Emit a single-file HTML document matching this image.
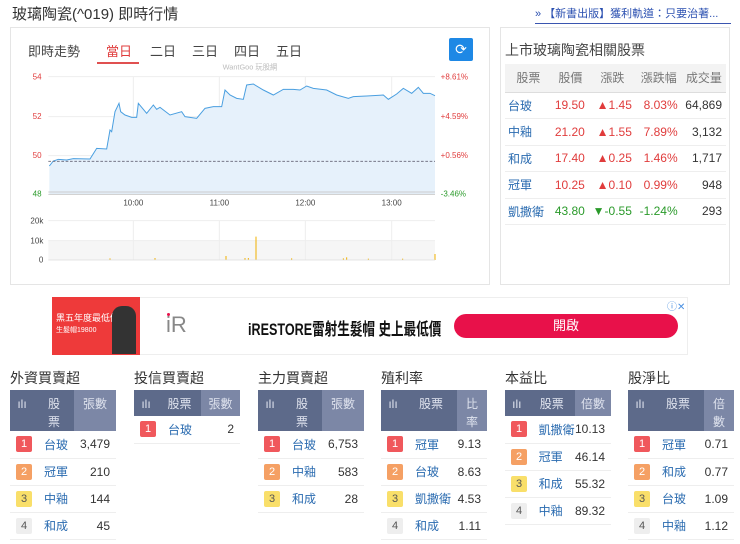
<!DOCTYPE html>
<html><head><meta charset="utf-8"><style>
*{margin:0;padding:0;box-sizing:border-box}
body{width:740px;height:544px;background:#fff;font-family:"Liberation Sans","Noto Sans CJK TC",sans-serif;color:#333;position:relative;overflow:hidden}
.a{position:absolute;white-space:nowrap}
table{border-collapse:collapse}
.rt{position:absolute;left:505px;top:64px;width:221px;font-size:12px}
.rt th{background:#f3f3f3;color:#777;font-weight:normal;height:28px;border-bottom:1px solid #ddd}
.rt td{height:26.5px;border-bottom:1px solid #eee;text-align:right;padding-right:4px}
.rt td:first-child{text-align:left;color:#2a6bb0;padding-left:3px}
.r{color:#e03c3c}.g{color:#2a9a2a}
.col{position:absolute;top:370px;width:106px;font-size:12px}
.col h3{font-weight:normal;font-size:14px;color:#333;height:20px;line-height:16px}
.col table{width:106px}
.col th{background:#5d6a8a;color:#dfe3ee;font-weight:normal;font-size:12px;vertical-align:top;padding-top:5px;line-height:18px}
.col th.l{background:#7c87a6}
.col td{height:27px;border-bottom:1px solid #eee}
.n{display:inline-block;width:16px;height:16px;border-radius:2px;color:#fff;font-size:11px;text-align:center;line-height:16px;margin-left:6px}
.n1{background:#f0585c}.n2{background:#f5a064}.n3{background:#f9df6a;color:#555}.n4{background:#eee;color:#555}
.nm{color:#2a6bb0;text-align:left;padding-left:10px}
.v{text-align:right;padding-right:6px;color:#333}
</style></head><body>
<div class="a" style="left:12px;top:3px;font-size:15px;color:#333">玻璃陶瓷(^019) 即時行情</div>
<div class="a" style="left:535px;top:5px;font-size:11px;color:#2a4fb0;border-bottom:1px solid #3a55b0;padding-bottom:2px;width:196px">» 【新書出版】獲利軌道：只要治著...</div>
<div class="a" style="left:10px;top:27px;width:480px;height:258px;border:1px solid #e5e5e5"></div>
<div class="a" style="left:500px;top:27px;width:230px;height:258px;border:1px solid #e5e5e5"></div>
<div class="a" style="left:28px;top:41px;font-size:13px;color:#444">即時走勢</div>
<div class="a" style="left:97px;top:41px;font-size:13px;color:#444;width:190px">
<span style="position:absolute;left:9px;color:#e03c3c">當日</span><span style="position:absolute;left:53px">二日</span><span style="position:absolute;left:95px">三日</span><span style="position:absolute;left:137px">四日</span><span style="position:absolute;left:179px">五日</span></div>
<div class="a" style="left:97px;top:62px;width:42px;height:2px;background:#e05050"></div>
<div class="a" style="left:449px;top:38px;width:24px;height:23px;background:#1e88e5;border-radius:2px;color:#fff;font-size:14px;text-align:center;line-height:23px">⟳</div>
<svg class="a" style="left:0;top:0" width="490" height="280" viewBox="0 0 1470 840">
<text x="750" y="208" font-size="22" fill="#bbb" text-anchor="middle" font-family="Liberation Sans">WantGoo 玩股網</text>
<g stroke="#eee" stroke-width="3"><line x1="400" y1="230" x2="400" y2="583"/><line x1="658" y1="230" x2="658" y2="583"/><line x1="916" y1="230" x2="916" y2="583"/><line x1="1175" y1="230" x2="1175" y2="583"/>
<line x1="145" y1="230" x2="1305" y2="230"/><line x1="145" y1="350" x2="1305" y2="350"/><line x1="145" y1="467" x2="1305" y2="467"/></g>
<path d="M148,498 L160,483 175,478 200,480 220,476 270,477 290,445 320,447 330,390 335,395 345,335 357,310 362,335 375,345 395,352 410,352 415,310 440,340 460,315 470,328 480,322 510,345 545,335 555,350 590,355 615,325 640,320 665,320 675,270 690,285 710,295 730,298 740,255 760,252 790,270 820,285 850,268 880,268 900,270 920,258 940,265 980,270 1010,285 1045,295 1060,290 1100,288 1150,285 1165,298 1190,282 1210,265 1235,280 1255,262 1270,280 1290,280 1305,287 L1305,583 L148,583Z" fill="#e6f1fb" stroke="none"/>
<path d="M148,498 L160,483 175,478 200,480 220,476 270,477 290,445 320,447 330,390 335,395 345,335 357,310 362,335 375,345 395,352 410,352 415,310 440,340 460,315 470,328 480,322 510,345 545,335 555,350 590,355 615,325 640,320 665,320 675,270 690,285 710,295 730,298 740,255 760,252 790,270 820,285 850,268 880,268 900,270 920,258 940,265 980,270 1010,285 1045,295 1060,290 1100,288 1150,285 1165,298 1190,282 1210,265 1235,280 1255,262 1270,280 1290,280 1305,287" fill="none" stroke="#4a9fe0" stroke-width="3"/>
<line x1="145" y1="484" x2="1305" y2="484" stroke="#667" stroke-width="2.5" stroke-dasharray="8,5"/>
<line x1="145" y1="576" x2="1305" y2="576" stroke="#ccc" stroke-width="3"/>
<line x1="145" y1="583" x2="1305" y2="583" stroke="#ccc" stroke-width="3"/>
<g font-family="Liberation Sans" font-size="24"><text x="98" y="238" fill="#e03c3c">54</text><text x="98" y="357" fill="#e03c3c">52</text><text x="98" y="474" fill="#e03c3c">50</text><text x="98" y="590" fill="#2a9a2a">48</text>
<text x="1322" y="238" fill="#e03c3c">+8.61%</text><text x="1322" y="357" fill="#e03c3c">+4.59%</text><text x="1322" y="474" fill="#e03c3c">+0.56%</text><text x="1322" y="590" fill="#2a9a2a">-3.46%</text>
<g fill="#444" text-anchor="middle"><text x="400" y="616">10:00</text><text x="658" y="616">11:00</text><text x="916" y="616">12:00</text><text x="1175" y="616">13:00</text></g>
<g fill="#444" text-anchor="end"><text x="130" y="670">20k</text><text x="130" y="730">10k</text><text x="130" y="788">0</text></g></g>
<rect x="145" y="722" width="1160" height="58" fill="#f6f6f6"/>
<g stroke="#eee" stroke-width="3"><line x1="145" y1="662" x2="1305" y2="662"/><line x1="145" y1="722" x2="1305" y2="722"/><line x1="400" y1="662" x2="400" y2="780"/><line x1="658" y1="662" x2="658" y2="780"/><line x1="916" y1="662" x2="916" y2="780"/><line x1="1175" y1="662" x2="1175" y2="780"/></g>
<g stroke="#f0b000" stroke-width="3"><line x1="768" y1="710" x2="768" y2="780"/><line x1="678" y1="768" x2="678" y2="780"/><line x1="1305" y1="762" x2="1305" y2="780"/><line x1="330" y1="775" x2="330" y2="780"/><line x1="465" y1="774" x2="465" y2="780"/><line x1="735" y1="774" x2="735" y2="780"/><line x1="745" y1="774" x2="745" y2="780"/><line x1="875" y1="775" x2="875" y2="780"/><line x1="1040" y1="772" x2="1040" y2="780"/><line x1="1030" y1="775" x2="1030" y2="780"/><line x1="1105" y1="776" x2="1105" y2="780"/><line x1="1208" y1="776" x2="1208" y2="780"/></g>
<line x1="145" y1="780" x2="1305" y2="780" stroke="#ddd" stroke-width="2"/>
</svg>
<div class="a" style="left:505px;top:40px;font-size:14px;color:#444">上市玻璃陶瓷相關股票</div>
<table class="rt"><tr><th>股票</th><th>股價</th><th>漲跌</th><th>漲跌幅</th><th>成交量</th></tr>
<tr><td>台玻</td><td class="r">19.50</td><td class="r">▲1.45</td><td class="r">8.03%</td><td>64,869</td></tr>
<tr><td>中釉</td><td class="r">21.20</td><td class="r">▲1.55</td><td class="r">7.89%</td><td>3,132</td></tr>
<tr><td>和成</td><td class="r">17.40</td><td class="r">▲0.25</td><td class="r">1.46%</td><td>1,717</td></tr>
<tr><td>冠軍</td><td class="r">10.25</td><td class="r">▲0.10</td><td class="r">0.99%</td><td>948</td></tr>
<tr><td>凱撒衛</td><td class="g">43.80</td><td class="g">▼-0.55</td><td class="g">-1.24%</td><td>293</td></tr></table>
<div class="a" style="left:52px;top:297px;width:636px;height:58px;border:1px solid #eee"></div>
<div class="a" style="left:52px;top:297px;width:88px;height:58px;background:#ee3a3a;color:#fff;font-size:9px;padding:14px 0 0 4px">黑五年度最低價<br><span style="font-size:7px">生髮帽19800</span></div>
<div class="a" style="left:112px;top:306px;width:24px;height:48px;background:#333;border-radius:10px 10px 0 0"></div>
<div class="a" style="left:166px;top:312px;font-size:22px;color:#888;font-weight:300">i<span style="color:#888">R</span></div>
<div class="a" style="left:167px;top:313px;width:3px;height:3px;border-radius:50%;background:#e8114a"></div>
<div class="a" style="left:248px;top:315px;font-size:17px;font-weight:bold;color:#111;transform:scaleX(.74);transform-origin:0 0">iRESTORE雷射生髮帽 史上最低價</div>
<div class="a" style="left:454px;top:314px;width:224px;height:24px;background:#e8114a;border-radius:12px;color:#fff;font-size:13px;text-align:center;line-height:24px">開啟</div>
<div class="a" style="left:667px;top:298px;font-size:10px;color:#4a90e2">ⓘ✕</div>

<div class="col" style="left:10px"><h3>外資買賣超</h3><table><tr><th style="width:24px">ılı</th><th style="width:40px">股<br>票</th><th class="l">張數</th></tr>
<tr><td><span class="n n1">1</span></td><td class="nm">台玻</td><td class="v">3,479</td></tr>
<tr><td><span class="n n2">2</span></td><td class="nm">冠軍</td><td class="v">210</td></tr>
<tr><td><span class="n n3">3</span></td><td class="nm">中釉</td><td class="v">144</td></tr>
<tr><td><span class="n n4">4</span></td><td class="nm">和成</td><td class="v">45</td></tr></table></div>
<div class="col" style="left:134px"><h3>投信買賣超</h3><table><tr><th style="width:24px;height:26px">ılı</th><th style="width:43px">股票</th><th class="l">張數</th></tr>
<tr><td><span class="n n1">1</span></td><td class="nm">台玻</td><td class="v">2</td></tr></table></div>
<div class="col" style="left:258px"><h3>主力買賣超</h3><table><tr><th style="width:24px">ılı</th><th style="width:40px">股<br>票</th><th class="l">張數</th></tr>
<tr><td><span class="n n1">1</span></td><td class="nm">台玻</td><td class="v">6,753</td></tr>
<tr><td><span class="n n2">2</span></td><td class="nm">中釉</td><td class="v">583</td></tr>
<tr><td><span class="n n3">3</span></td><td class="nm">和成</td><td class="v">28</td></tr></table></div>
<div class="col" style="left:381px"><h3>殖利率</h3><table><tr><th style="width:24px">ılı</th><th style="width:52px">股票</th><th class="l">比<br>率</th></tr>
<tr><td><span class="n n1">1</span></td><td class="nm">冠軍</td><td class="v">9.13</td></tr>
<tr><td><span class="n n2">2</span></td><td class="nm">台玻</td><td class="v">8.63</td></tr>
<tr><td><span class="n n3">3</span></td><td class="nm">凱撒衛</td><td class="v">4.53</td></tr>
<tr><td><span class="n n4">4</span></td><td class="nm">和成</td><td class="v">1.11</td></tr></table></div>
<div class="col" style="left:505px"><h3>本益比</h3><table><tr><th style="width:24px;height:26px">ılı</th><th style="width:52px">股票</th><th class="l">倍數</th></tr>
<tr><td><span class="n n1">1</span></td><td class="nm">凱撒衛</td><td class="v">10.13</td></tr>
<tr><td><span class="n n2">2</span></td><td class="nm">冠軍</td><td class="v">46.14</td></tr>
<tr><td><span class="n n3">3</span></td><td class="nm">和成</td><td class="v">55.32</td></tr>
<tr><td><span class="n n4">4</span></td><td class="nm">中釉</td><td class="v">89.32</td></tr></table></div>
<div class="col" style="left:628px"><h3>股淨比</h3><table><tr><th style="width:24px">ılı</th><th style="width:52px">股票</th><th class="l">倍<br>數</th></tr>
<tr><td><span class="n n1">1</span></td><td class="nm">冠軍</td><td class="v">0.71</td></tr>
<tr><td><span class="n n2">2</span></td><td class="nm">和成</td><td class="v">0.77</td></tr>
<tr><td><span class="n n3">3</span></td><td class="nm">台玻</td><td class="v">1.09</td></tr>
<tr><td><span class="n n4">4</span></td><td class="nm">中釉</td><td class="v">1.12</td></tr></table></div>
</body></html>
